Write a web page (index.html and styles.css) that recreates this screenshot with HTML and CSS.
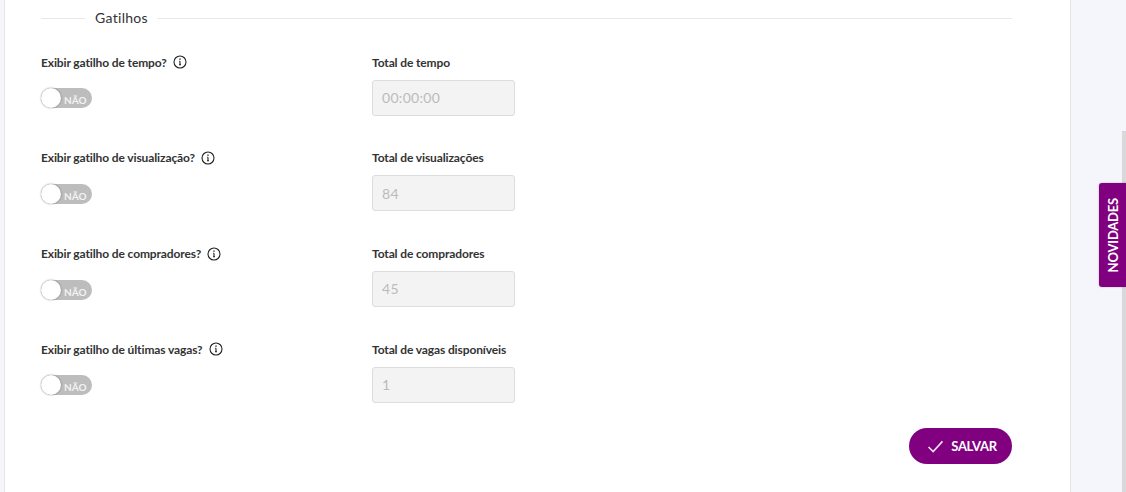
FILE: index.html
```html
<!DOCTYPE html>
<html lang="en">
<head>
    <meta charset="UTF-8">
    <meta name="viewport" content="width=device-width, initial-scale=1.0">
    <title>Gatilhos</title>
    <link rel="stylesheet" href="styles.css">
</head>
<body>
    <main class="panel">
        <div class="section-title"><span>Gatilhos</span></div>

        <div class="trigger-row">
            <div class="trigger-col">
                <div class="field-label">Exibir gatilho de tempo?
                    <svg class="info" viewBox="0 0 14 14"><circle cx="7" cy="7" r="6"/><path d="M7 6.2v3.6M6 9.8h2M6.2 6.2H7"/><path class="dot" d="M7 3.6v1.1"/></svg>
                </div>
                <div class="switch"><span class="knob"></span><span class="switch-text">NÃO</span></div>
            </div>
            <div class="total-col">
                <div class="field-label">Total de tempo</div>
                <input class="total-input" type="text" placeholder="00:00:00" disabled>
            </div>
        </div>

        <div class="trigger-row">
            <div class="trigger-col">
                <div class="field-label">Exibir gatilho de visualização?
                    <svg class="info" viewBox="0 0 14 14"><circle cx="7" cy="7" r="6"/><path d="M7 6.2v3.6M6 9.8h2M6.2 6.2H7"/><path class="dot" d="M7 3.6v1.1"/></svg>
                </div>
                <div class="switch"><span class="knob"></span><span class="switch-text">NÃO</span></div>
            </div>
            <div class="total-col">
                <div class="field-label">Total de visualizações</div>
                <input class="total-input" type="text" value="84" disabled>
            </div>
        </div>

        <div class="trigger-row">
            <div class="trigger-col">
                <div class="field-label">Exibir gatilho de compradores?
                    <svg class="info" viewBox="0 0 14 14"><circle cx="7" cy="7" r="6"/><path d="M7 6.2v3.6M6 9.8h2M6.2 6.2H7"/><path class="dot" d="M7 3.6v1.1"/></svg>
                </div>
                <div class="switch"><span class="knob"></span><span class="switch-text">NÃO</span></div>
            </div>
            <div class="total-col">
                <div class="field-label">Total de compradores</div>
                <input class="total-input" type="text" value="45" disabled>
            </div>
        </div>

        <div class="trigger-row">
            <div class="trigger-col">
                <div class="field-label">Exibir gatilho de últimas vagas?
                    <svg class="info" viewBox="0 0 14 14"><circle cx="7" cy="7" r="6"/><path d="M7 6.2v3.6M6 9.8h2M6.2 6.2H7"/><path class="dot" d="M7 3.6v1.1"/></svg>
                </div>
                <div class="switch"><span class="knob"></span><span class="switch-text">NÃO</span></div>
            </div>
            <div class="total-col">
                <div class="field-label">Total de vagas disponíveis</div>
                <input class="total-input" type="text" value="1" disabled>
            </div>
        </div>

        <div class="actions">
            <button class="save-btn" type="button">
                <svg viewBox="0 0 18 14"><path d="M1.5 7.5l5 5L16.5 1.5"/></svg>
                SALVAR
            </button>
        </div>
    </main>
    <aside class="side">
        <div class="scrollbar"></div>
        <div class="news-tab"><span>NOVIDADES</span></div>
    </aside>
</body>
</html>
```

FILE: styles.css
```css
html, body {
    height: 100%;
}
body {
    font-family: Lato, "Open Sans", sans-serif;
    display: flex;
    height: 492px;
    margin: 0;
    overflow: hidden;
    background-color: #f5f6fa;
    color: #333;
}
.panel {
    box-sizing: border-box;
    width: 1067px;
    height: 492px;
    margin-left: 4px;
    padding: 9px 58px 0 36px;
    background: white;
    border-left: 1px solid #e6e6e6;
    border-right: 1px solid #e6e6e6;
}
.section-title {
    display: flex;
    align-items: center;
    height: 18px;
    margin-bottom: 25.6px;
    font-size: 14px;
    letter-spacing: 0.3px;
    color: #333;
}
.section-title span {
    padding-bottom: 2px;
}
.section-title::before,
.section-title::after {
    content: "";
    height: 1px;
    background: #e8e8e8;
}
.section-title::before {
    width: 44px;
    margin-right: 10px;
}
.section-title::after {
    flex: 1;
    margin-left: 9px;
}
.trigger-row {
    display: flex;
    height: 95.7px;
}
.trigger-col {
    width: 331px;
}
.total-col {
    width: 143px;
}
.field-label {
    display: flex;
    align-items: center;
    gap: 6px;
    height: 18px;
    margin-top: 0.6px;
    margin-bottom: 8.4px;
    font-size: 12px;
    font-weight: 700;
    letter-spacing: -0.12px;
    color: #333;
}
.info {
    width: 14px;
    height: 14px;
    fill: none;
    stroke: #222;
    stroke-width: 1.1;
}
.info .dot {
    stroke-width: 1.4;
}
.switch {
    position: relative;
    box-sizing: border-box;
    width: 51px;
    height: 20px;
    margin-top: 17px;
    padding-left: 23px;
    border-radius: 10px;
    background: #bdbdbd;
    line-height: 20px;
}
.switch-text {
    font-size: 10px;
    font-weight: 700;
    color: #f2f2f2;
}
.knob {
    position: absolute;
    left: 0;
    top: 0;
    box-sizing: border-box;
    width: 20px;
    height: 20px;
    border-radius: 50%;
    background: white;
    box-shadow: 0 0 2px rgba(0,0,0,0.45);
}
.total-input {
    display: block;
    box-sizing: border-box;
    width: 143px;
    height: 36px;
    padding: 0 9px;
    border: 1px solid #ddd;
    border-radius: 3px;
    background: #f3f3f3;
    font-family: inherit;
    font-size: 14px;
    letter-spacing: 0.3px;
    color: #bbb;
    -webkit-text-fill-color: #bbb;
    opacity: 1;
}
.total-input::placeholder {
    color: #bbb;
    -webkit-text-fill-color: #bbb;
    opacity: 1;
}
.actions {
    display: flex;
    justify-content: flex-end;
    margin-top: -7px;
}
.save-btn {
    display: flex;
    align-items: center;
    justify-content: center;
    gap: 7px;
    width: 103px;
    height: 36px;
    padding: 0 0 0 3px;
    border: none;
    border-radius: 18px;
    background-color: #800080;
    color: white;
    font-family: inherit;
    font-size: 13px;
    font-weight: 700;
    letter-spacing: -0.3px;
}
.save-btn svg {
    width: 17px;
    height: 13px;
    fill: none;
    stroke: #f0e4f2;
    stroke-width: 1.7;
}
.side {
    position: relative;
    flex: 1;
    background: #f4f6fb;
}
.scrollbar {
    position: absolute;
    right: 0;
    top: 131px;
    bottom: 0;
    width: 4px;
    background: #d9d9d9;
}
.news-tab {
    position: absolute;
    right: 0;
    top: 183px;
    display: flex;
    align-items: center;
    justify-content: center;
    width: 27px;
    height: 104px;
    border-radius: 3px 0 0 3px;
    background: #800080;
    box-shadow: 0 0 2px rgba(0,0,0,0.3);
}
.news-tab span {
    writing-mode: vertical-rl;
    transform: rotate(180deg);
    font-size: 13px;
    font-weight: 700;
    letter-spacing: -0.2px;
    color: white;
}
```
